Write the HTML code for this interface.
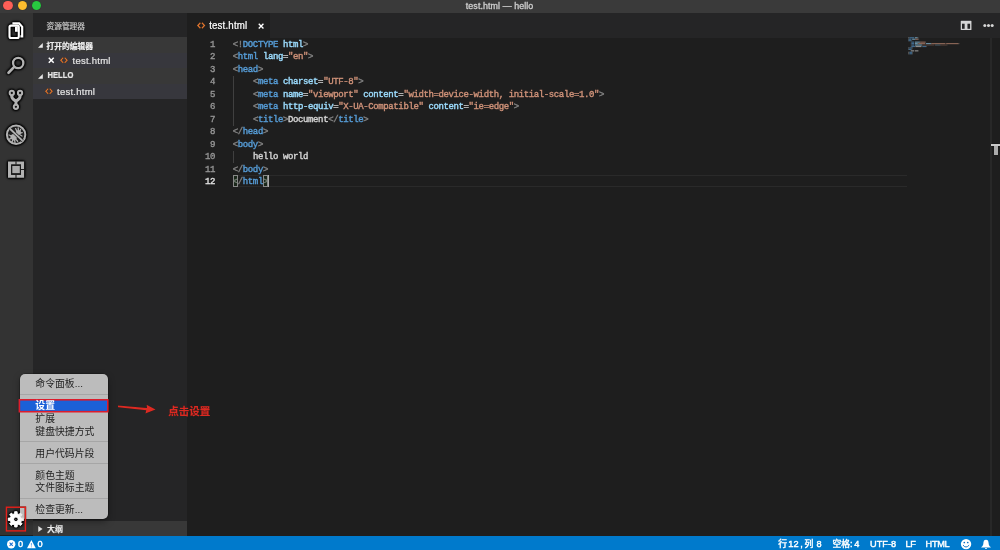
<!DOCTYPE html>
<html lang="zh">
<head>
<meta charset="UTF-8">
<title>test.html — hello</title>
<style>
*{box-sizing:border-box;margin:0;padding:0}
html,body{width:1000px;height:550px;overflow:hidden;background:#1e1e1e}
body{position:relative;font-family:"Liberation Sans",sans-serif;font-size:9px;color:#ccc;-webkit-font-smoothing:antialiased}
.abs{position:absolute}
svg{display:block;overflow:visible}
.hi{filter:drop-shadow(0 0 .6px rgba(0,0,0,.9))}
.cj{font-family:"Liberation Sans","Noto Sans CJK SC",sans-serif}
.lat{transform:scaleY(1.15);transform-origin:0 58%;-webkit-text-stroke:.3px currentColor}
.t{position:absolute;white-space:nowrap;line-height:12px;height:12px;-webkit-text-stroke:.2px currentColor}
/* regions */
#titlebar{left:0;top:0;width:1000px;height:13px;background:#3a3a3a}
#title{left:0;width:999px;top:1px;text-align:center;font-size:8.9px;color:#d0d0d0;line-height:11px;-webkit-text-stroke:.3px #d0d0d0}
.tl{position:absolute;top:.8px;width:9.4px;height:9.4px;border-radius:50%;box-shadow:0 0 .8px rgba(0,0,0,.7)}
#activity{left:0;top:13px;width:33px;height:522px;background:#333333}
#sidebar{left:33px;top:13px;width:154px;height:522px;background:#252526}
#tabs{left:187px;top:13px;width:813px;height:25px;background:#252526}
#tab{left:187px;top:13px;width:83px;height:25px;background:#1e1e1e}
#status{left:0;top:536px;width:1000px;height:14px;background:#007acc}
.row{position:absolute;left:33px;width:154px;height:15.4px}
.hdr{background:#383838}
.sel{background:#37373d}
/* code */
.ln{position:absolute;left:195px;width:20px;text-align:right;font-family:"Liberation Mono",monospace;font-size:9px;letter-spacing:-.37px;line-height:12.5px;height:12.5px;color:#969696;-webkit-text-stroke:.35px currentColor}
.lc{white-space:pre}
.lc i{display:inline-block;font-style:normal;overflow:visible}
.cl i{display:inline-block;width:5.03px;font-style:normal;overflow:visible}
.cl{position:absolute;left:232.8px;white-space:pre;font-family:"Liberation Mono",monospace;font-size:9px;line-height:12.5px;height:12.5px;color:#d4d4d4;-webkit-text-stroke:.4px currentColor}
.g{color:#808080}.b{color:#569cd6}.a{color:#9cdcfe}.s{color:#ce9178}
.guide{position:absolute;left:233px;width:1px;background:#404040}
/* menu */
#menu{left:20px;top:373.5px;width:88px;height:145px;background:#bcbcbc;border-radius:5px;box-shadow:0 3px 7px rgba(0,0,0,.35),0 0 0 .5px rgba(0,0,0,.4)}
.mi{position:absolute;left:15.3px;white-space:nowrap;color:#222;font-size:9.85px;line-height:12px;height:12px}
.sep{position:absolute;left:0;width:88px;height:1px;background:#a6a6a6;box-shadow:0 0 .6px #a6a6a6}
.st{position:absolute;top:538.2px;color:#fff;-webkit-text-stroke:.4px #fff;font-size:9.2px;line-height:12px;height:12px;white-space:nowrap}
</style>
</head>
<body>
<div id="root" style="position:absolute;left:0;top:0;width:1000px;height:550px;will-change:transform">
<!-- title bar -->
<div id="titlebar" class="abs"></div>
<div class="tl" style="left:3.3px;background:#fc5f57"></div>
<div class="tl" style="left:17.5px;background:#fdbc2e"></div>
<div class="tl" style="left:31.5px;background:#28c840"></div>
<div id="title" class="abs"><span class="lc"><i style="width:2.55px">t</i><i style="width:5.03px">e</i><i style="width:4.53px">s</i><i style="width:2.55px">t</i><i style="width:2.55px">.</i><i style="width:5.03px">h</i><i style="width:2.55px">t</i><i style="width:7.49px">m</i><i style="width:2.06px">l</i><i style="width:2.55px"> </i><i style="width:8.98px">—</i><i style="width:2.55px"> </i><i style="width:5.03px">h</i><i style="width:5.03px">e</i><i style="width:2.06px">l</i><i style="width:2.06px">l</i><i style="width:5.03px">o</i></span></div>

<!-- activity bar -->
<div id="activity" class="abs"></div>
<svg class="abs" style="left:0;top:0;filter:drop-shadow(0 0 .9px #000) drop-shadow(0 0 .8px #000) drop-shadow(0 0 .6px rgba(0,0,0,.8))" width="34" height="200" viewBox="0 0 34 200">
<path d="M12.4 23.3H19.1L22.2 26.8V36.3H20.4" fill="none" stroke="#fff" stroke-width="2.2" stroke-linejoin="miter"/>
<path d="M11 25.6H17.3Q18.8 25.6 18.8 27.1V36.5Q18.8 38 17.3 38H11Q9.5 38 9.5 36.5V27.1Q9.5 25.6 11 25.6Z" fill="none" stroke="#fff" stroke-width="2.1"/>
<path d="M15 26.6H17.8V31.8H15Z" fill="#fff"/>
<circle cx="18.2" cy="63" r="5.15" fill="none" stroke="#b2b2b2" stroke-width="2.3"/>
<path d="M14.2 66.9L8.5 72.7" stroke="#b2b2b2" stroke-width="2.7" stroke-linecap="round"/>
<path d="M11.8 95.3V96.6Q11.8 98.6 15.9 101.3Q20.05 98.6 20.05 96.6V95.3M15.9 101V105" fill="none" stroke="#b2b2b2" stroke-width="3.1" stroke-linejoin="round"/>
<circle cx="11.8" cy="93.0" r="2.15" fill="#161616" stroke="#b2b2b2" stroke-width="2"/>
<circle cx="20.05" cy="93.0" r="2.15" fill="#161616" stroke="#b2b2b2" stroke-width="2"/>
<circle cx="15.9" cy="106.8" r="2.15" fill="#161616" stroke="#b2b2b2" stroke-width="2"/>
<circle cx="16.1" cy="134.7" r="9.2" fill="#1f1f1f" stroke="#b2b2b2" stroke-width="2"/>
<g stroke="#b2b2b2" stroke-width="1.3" fill="none" stroke-linecap="round"><path d="M15.6 128.6L16.8 131.2M18.2 127.9L18.4 130.6M20.6 129.4L19.6 131.6M22.2 132.6L20 133.2M22 136L19.8 134.8M9 135L11.6 136M9.4 139.2L11.8 138.2M12 142L13 139.6M15 142.6L14.6 140M17.6 141.2L16 139.4"/></g>
<ellipse cx="13.6" cy="137.3" rx="2.9" ry="3.3" fill="#b2b2b2" transform="rotate(-45 13.6 137.3)"/>
<circle cx="18.5" cy="132.4" r="2.5" fill="#b2b2b2"/>
<path d="M9.9 128.7L22.6 140.8" stroke="#181818" stroke-width="3.2"/>
<path d="M9.7 128.5L22.7 140.9" stroke="#b2b2b2" stroke-width="1.9"/>
<path fill="#b2b2b2" fill-rule="evenodd" d="M8.0 161.5H24.1V177.8H8.0ZM11.1 164.6V174.70000000000002H21.0V164.6Z"/>
<path fill="#202020" d="M15.45 161.3H16.55V164.79999999999998H15.45ZM15.45 174.50000000000003H16.55V178.0H15.45ZM20.8 168.9H24.3V169.9H20.8Z"/>
<path fill="#1c1c1c" d="M11.1 164.6H21.0V174.70000000000002H11.1Z"/>
<path fill="#aaaaaa" d="M12.3 166H19.8V173.1H12.3Z"/>
</svg>

<!-- sidebar -->
<div id="sidebar" class="abs"></div>
<div class="t" style="left:46.5px;top:19.5px"><span class="cj" style="font-size:7.7px;color:#c8c8c8">资源管理器</span></div>
<div class="row hdr" style="top:37.4px"></div>
<div class="row sel" style="top:52.8px"></div>
<div class="row hdr" style="top:68.2px"></div>
<div class="row sel" style="top:83.6px"></div>
<svg class="abs" style="left:38.2px;top:42.9px" width="4.8" height="4.8" viewBox="0 0 5 5"><path d="M5 0V5H0Z" fill="#e8e8e8"/></svg>
<div class="t" style="left:46.5px;top:39.5px"><span class="cj" style="font-size:7.75px;font-weight:bold;color:#eeeeee">打开的编辑器</span></div>
<svg class="abs" style="left:48px;top:57.3px" width="6.5" height="6.5" viewBox="0 0 10 10"><path d="M1.2 1.2L8.8 8.8M8.8 1.2L1.2 8.8" stroke="#fff" stroke-width="2.3" fill="none"/></svg>
<svg class="abs hi" style="left:59.7px;top:57.3px" width="7.9" height="6.5" viewBox="0 0 17 14"><path d="M7 1.3L1.7 7L7 12.7M10 1.3L15.3 7L10 12.7" stroke="#dc7530" stroke-width="2.7" fill="none"/></svg>
<div class="t lat" style="left:72.5px;top:54.8px;font-size:9.5px;color:#e4e4e4;transform:scaleY(1.05)"><span class="lc"><i style="width:2.90px">t</i><i style="width:5.54px">e</i><i style="width:5.01px">s</i><i style="width:2.90px">t</i><i style="width:2.90px">.</i><i style="width:5.54px">h</i><i style="width:2.90px">t</i><i style="width:8.17px">m</i><i style="width:2.37px">l</i></span></div>
<svg class="abs" style="left:38.2px;top:73.6px" width="4.8" height="4.8" viewBox="0 0 5 5"><path d="M5 0V5H0Z" fill="#e8e8e8"/></svg>
<div class="t" style="left:47.4px;top:69.9px;font-size:7.6px;font-weight:bold;color:#e6e6e6;transform:scaleY(1.16);transform-origin:0 55%"><span class="lc"><i style="width:5.54px">H</i><i style="width:5.12px">E</i><i style="width:4.69px">L</i><i style="width:4.69px">L</i><i style="width:5.96px">O</i></span></div>
<svg class="abs hi" style="left:44.6px;top:88.3px" width="7.9" height="6.5" viewBox="0 0 17 14"><path d="M7 1.3L1.7 7L7 12.7M10 1.3L15.3 7L10 12.7" stroke="#dc7530" stroke-width="2.7" fill="none"/></svg>
<div class="t lat" style="left:57px;top:86.2px;font-size:9.5px;color:#e4e4e4;transform:scaleY(1.05)"><span class="lc"><i style="width:2.90px">t</i><i style="width:5.54px">e</i><i style="width:5.01px">s</i><i style="width:2.90px">t</i><i style="width:2.90px">.</i><i style="width:5.54px">h</i><i style="width:2.90px">t</i><i style="width:8.17px">m</i><i style="width:2.37px">l</i></span></div>
<!-- outline row -->
<div class="row" style="top:521px;height:15px;background:#383838"></div>
<svg class="abs" style="left:37.8px;top:526.3px" width="4.8" height="6" viewBox="0 0 5 7"><path d="M0 0L5 3.5L0 7Z" fill="#e0e0e0"/></svg>
<div class="t" style="left:47px;top:523px;filter:drop-shadow(0 0 .5px rgba(0,0,0,.8))"><span class="cj" style="font-size:8px;font-weight:bold;color:#f0f0f0">大纲</span></div>

<!-- tabs -->
<div id="tabs" class="abs"></div>
<div id="tab" class="abs"></div>
<svg class="abs hi" style="left:196.8px;top:22.4px" width="8.3" height="7" viewBox="0 0 17 14"><path d="M7 1.3L1.7 7L7 12.7M10 1.3L15.3 7L10 12.7" stroke="#dc7530" stroke-width="2.7" fill="none"/></svg>
<div class="t lat" style="left:209.2px;top:20.4px;font-size:9.7px;color:#ffffff"><span class="lc"><i style="width:2.86px">t</i><i style="width:5.56px">e</i><i style="width:5.02px">s</i><i style="width:2.86px">t</i><i style="width:2.86px">.</i><i style="width:5.56px">h</i><i style="width:2.86px">t</i><i style="width:8.25px">m</i><i style="width:2.33px">l</i></span></div>
<svg class="abs" style="left:258px;top:23px" width="6.2" height="6.2" viewBox="0 0 10 10"><path d="M1.2 1.2L8.8 8.8M8.8 1.2L1.2 8.8" stroke="#fff" stroke-width="2.2" fill="none"/></svg>
<!-- split + more -->
<svg class="abs" style="left:955px;top:15px;filter:drop-shadow(0 0 .6px #000)" width="45" height="20" viewBox="955 15 45 20"><path fill="#d6d6d6" fill-rule="evenodd" d="M961.2 20.8H971Q971.5 20.8 971.5 21.3V29.5Q971.5 30 971 30H961.2Q960.7 30 960.7 29.5V21.3Q960.7 20.8 961.2 20.8ZM962 23.7V28.7H964.6V23.7ZM967.5 23.7V28.7H970.1V23.7Z"/><circle cx="984.8" cy="25.5" r="1.55" fill="#d6d6d6"/><circle cx="988.5" cy="25.5" r="1.55" fill="#d6d6d6"/><circle cx="992.2" cy="25.5" r="1.55" fill="#d6d6d6"/></svg>

<!-- editor -->
<div class="abs" style="left:233px;top:174.8px;width:674px;height:12.7px;border-top:1px solid #2a2a2a;border-bottom:1px solid #2a2a2a"></div>
<div class="guide" style="top:75.5px;height:50px"></div>
<div class="guide" style="top:150.5px;height:12.5px"></div>
<div class="ln" style="top:38.60px">1</div>
<div class="cl" style="top:38.60px"><span class="g"><i>&lt;</i><i>!</i></span><span class="b"><i>D</i><i>O</i><i>C</i><i>T</i><i>Y</i><i>P</i><i>E</i></span><i style="width:5.03px"> </i><span class="a"><i>h</i><i>t</i><i>m</i><i>l</i></span><span class="g"><i>&gt;</i></span></div>
<div class="ln" style="top:51.10px">2</div>
<div class="cl" style="top:51.10px"><span class="g"><i>&lt;</i></span><span class="b"><i>h</i><i>t</i><i>m</i><i>l</i></span><i style="width:5.03px"> </i><span class="a"><i>l</i><i>a</i><i>n</i><i>g</i></span><i>=</i><span class="s"><i>"</i><i>e</i><i>n</i><i>"</i></span><span class="g"><i>&gt;</i></span></div>
<div class="ln" style="top:63.60px">3</div>
<div class="cl" style="top:63.60px"><span class="g"><i>&lt;</i></span><span class="b"><i>h</i><i>e</i><i>a</i><i>d</i></span><span class="g"><i>&gt;</i></span></div>
<div class="ln" style="top:76.10px">4</div>
<div class="cl" style="top:76.10px"><i style="width:20.12px"> </i><span class="g"><i>&lt;</i></span><span class="b"><i>m</i><i>e</i><i>t</i><i>a</i></span><i style="width:5.03px"> </i><span class="a"><i>c</i><i>h</i><i>a</i><i>r</i><i>s</i><i>e</i><i>t</i></span><i>=</i><span class="s"><i>"</i><i>U</i><i>T</i><i>F</i><i>-</i><i>8</i><i>"</i></span><span class="g"><i>&gt;</i></span></div>
<div class="ln" style="top:88.60px">5</div>
<div class="cl" style="top:88.60px"><i style="width:20.12px"> </i><span class="g"><i>&lt;</i></span><span class="b"><i>m</i><i>e</i><i>t</i><i>a</i></span><i style="width:5.03px"> </i><span class="a"><i>n</i><i>a</i><i>m</i><i>e</i></span><i>=</i><span class="s"><i>"</i><i>v</i><i>i</i><i>e</i><i>w</i><i>p</i><i>o</i><i>r</i><i>t</i><i>"</i></span><i style="width:5.03px"> </i><span class="a"><i>c</i><i>o</i><i>n</i><i>t</i><i>e</i><i>n</i><i>t</i></span><i>=</i><span class="s"><i>"</i><i>w</i><i>i</i><i>d</i><i>t</i><i>h</i><i>=</i><i>d</i><i>e</i><i>v</i><i>i</i><i>c</i><i>e</i><i>-</i><i>w</i><i>i</i><i>d</i><i>t</i><i>h</i><i>,</i><i style="width:5.03px"> </i><i>i</i><i>n</i><i>i</i><i>t</i><i>i</i><i>a</i><i>l</i><i>-</i><i>s</i><i>c</i><i>a</i><i>l</i><i>e</i><i>=</i><i>1</i><i>.</i><i>0</i><i>"</i></span><span class="g"><i>&gt;</i></span></div>
<div class="ln" style="top:101.10px">6</div>
<div class="cl" style="top:101.10px"><i style="width:20.12px"> </i><span class="g"><i>&lt;</i></span><span class="b"><i>m</i><i>e</i><i>t</i><i>a</i></span><i style="width:5.03px"> </i><span class="a"><i>h</i><i>t</i><i>t</i><i>p</i><i>-</i><i>e</i><i>q</i><i>u</i><i>i</i><i>v</i></span><i>=</i><span class="s"><i>"</i><i>X</i><i>-</i><i>U</i><i>A</i><i>-</i><i>C</i><i>o</i><i>m</i><i>p</i><i>a</i><i>t</i><i>i</i><i>b</i><i>l</i><i>e</i><i>"</i></span><i style="width:5.03px"> </i><span class="a"><i>c</i><i>o</i><i>n</i><i>t</i><i>e</i><i>n</i><i>t</i></span><i>=</i><span class="s"><i>"</i><i>i</i><i>e</i><i>=</i><i>e</i><i>d</i><i>g</i><i>e</i><i>"</i></span><span class="g"><i>&gt;</i></span></div>
<div class="ln" style="top:113.60px">7</div>
<div class="cl" style="top:113.60px"><i style="width:20.12px"> </i><span class="g"><i>&lt;</i></span><span class="b"><i>t</i><i>i</i><i>t</i><i>l</i><i>e</i></span><span class="g"><i>&gt;</i></span><i>D</i><i>o</i><i>c</i><i>u</i><i>m</i><i>e</i><i>n</i><i>t</i><span class="g"><i>&lt;</i><i>/</i></span><span class="b"><i>t</i><i>i</i><i>t</i><i>l</i><i>e</i></span><span class="g"><i>&gt;</i></span></div>
<div class="ln" style="top:126.10px">8</div>
<div class="cl" style="top:126.10px"><span class="g"><i>&lt;</i><i>/</i></span><span class="b"><i>h</i><i>e</i><i>a</i><i>d</i></span><span class="g"><i>&gt;</i></span></div>
<div class="ln" style="top:138.60px">9</div>
<div class="cl" style="top:138.60px"><span class="g"><i>&lt;</i></span><span class="b"><i>b</i><i>o</i><i>d</i><i>y</i></span><span class="g"><i>&gt;</i></span></div>
<div class="ln" style="top:151.10px">10</div>
<div class="cl" style="top:151.10px"><i style="width:20.12px"> </i><i>h</i><i>e</i><i>l</i><i>l</i><i>o</i><i style="width:5.03px"> </i><i>w</i><i>o</i><i>r</i><i>l</i><i>d</i></div>
<div class="ln" style="top:163.60px">11</div>
<div class="cl" style="top:163.60px"><span class="g"><i>&lt;</i><i>/</i></span><span class="b"><i>b</i><i>o</i><i>d</i><i>y</i></span><span class="g"><i>&gt;</i></span></div>
<div class="ln" style="top:176.10px;color:#e2e2e2">12</div>
<div class="cl" style="top:176.10px"><span class="g"><i>&lt;</i><i>/</i></span><span class="b"><i>h</i><i>t</i><i>m</i><i>l</i></span><span class="g"><i>&gt;</i></span></div>
<div class="abs" style="left:232.9px;top:175.3px;width:5.3px;height:11.7px;border:1px solid #888;background:rgba(0,100,0,.13)"></div>
<div class="abs" style="left:263.1px;top:175.3px;width:5.3px;height:11.7px;border:1px solid #888;background:rgba(0,100,0,.13)"></div>
<div class="abs" style="left:268.3px;top:175.3px;width:1.2px;height:11.7px;background:#aeafad"></div>
<!-- minimap -->
<svg class="abs" style="left:907.5px;top:37.2px" width="60" height="18" viewBox="0 0 60 18" opacity=".6"><rect x="0.00" y="0.20" width="1.39" height="1.2" fill="#808080"/><rect x="1.39" y="0.20" width="4.86" height="1.2" fill="#569cd6"/><rect x="6.94" y="0.20" width="2.78" height="1.2" fill="#9cdcfe"/><rect x="9.72" y="0.20" width="0.69" height="1.2" fill="#808080"/><rect x="0.00" y="1.65" width="0.69" height="1.2" fill="#808080"/><rect x="0.69" y="1.65" width="2.78" height="1.2" fill="#569cd6"/><rect x="4.16" y="1.65" width="2.78" height="1.2" fill="#9cdcfe"/><rect x="6.94" y="1.65" width="0.69" height="1.2" fill="#d4d4d4"/><rect x="7.63" y="1.65" width="2.78" height="1.2" fill="#ce9178"/><rect x="10.41" y="1.65" width="0.69" height="1.2" fill="#808080"/><rect x="0.00" y="3.10" width="0.69" height="1.2" fill="#808080"/><rect x="0.69" y="3.10" width="2.78" height="1.2" fill="#569cd6"/><rect x="3.47" y="3.10" width="0.69" height="1.2" fill="#808080"/><rect x="2.78" y="4.55" width="0.69" height="1.2" fill="#808080"/><rect x="3.47" y="4.55" width="2.78" height="1.2" fill="#569cd6"/><rect x="6.94" y="4.55" width="4.86" height="1.2" fill="#9cdcfe"/><rect x="11.80" y="4.55" width="0.69" height="1.2" fill="#d4d4d4"/><rect x="12.49" y="4.55" width="4.86" height="1.2" fill="#ce9178"/><rect x="17.35" y="4.55" width="0.69" height="1.2" fill="#808080"/><rect x="2.78" y="6.00" width="0.69" height="1.2" fill="#808080"/><rect x="3.47" y="6.00" width="2.78" height="1.2" fill="#569cd6"/><rect x="6.94" y="6.00" width="2.78" height="1.2" fill="#9cdcfe"/><rect x="9.72" y="6.00" width="0.69" height="1.2" fill="#d4d4d4"/><rect x="10.41" y="6.00" width="6.94" height="1.2" fill="#ce9178"/><rect x="18.04" y="6.00" width="4.86" height="1.2" fill="#9cdcfe"/><rect x="22.90" y="6.00" width="0.69" height="1.2" fill="#d4d4d4"/><rect x="23.60" y="6.00" width="13.88" height="1.2" fill="#ce9178"/><rect x="38.17" y="6.00" width="12.49" height="1.2" fill="#ce9178"/><rect x="50.66" y="6.00" width="0.69" height="1.2" fill="#808080"/><rect x="2.78" y="7.45" width="0.69" height="1.2" fill="#808080"/><rect x="3.47" y="7.45" width="2.78" height="1.2" fill="#569cd6"/><rect x="6.94" y="7.45" width="6.94" height="1.2" fill="#9cdcfe"/><rect x="13.88" y="7.45" width="0.69" height="1.2" fill="#d4d4d4" opacity=".45"/><rect x="14.57" y="7.45" width="11.80" height="1.2" fill="#ce9178" opacity=".45"/><rect x="27.07" y="7.45" width="4.86" height="1.2" fill="#9cdcfe" opacity=".45"/><rect x="31.92" y="7.45" width="0.69" height="1.2" fill="#d4d4d4" opacity=".45"/><rect x="32.62" y="7.45" width="6.25" height="1.2" fill="#ce9178" opacity=".45"/><rect x="38.86" y="7.45" width="0.69" height="1.2" fill="#808080" opacity=".45"/><rect x="2.78" y="8.90" width="0.69" height="1.2" fill="#808080"/><rect x="3.47" y="8.90" width="3.47" height="1.2" fill="#569cd6"/><rect x="6.94" y="8.90" width="0.69" height="1.2" fill="#808080"/><rect x="7.63" y="8.90" width="5.55" height="1.2" fill="#d4d4d4"/><rect x="13.19" y="8.90" width="1.39" height="1.2" fill="#808080"/><rect x="14.57" y="8.90" width="3.47" height="1.2" fill="#569cd6"/><rect x="18.04" y="8.90" width="0.69" height="1.2" fill="#808080"/><rect x="0.00" y="10.35" width="1.39" height="1.2" fill="#808080"/><rect x="1.39" y="10.35" width="2.78" height="1.2" fill="#569cd6"/><rect x="4.16" y="10.35" width="0.69" height="1.2" fill="#808080"/><rect x="0.00" y="11.80" width="0.69" height="1.2" fill="#808080"/><rect x="0.69" y="11.80" width="2.78" height="1.2" fill="#569cd6"/><rect x="3.47" y="11.80" width="0.69" height="1.2" fill="#808080"/><rect x="2.78" y="13.25" width="3.47" height="1.2" fill="#d4d4d4"/><rect x="6.94" y="13.25" width="3.47" height="1.2" fill="#d4d4d4"/><rect x="0.00" y="14.70" width="1.39" height="1.2" fill="#808080"/><rect x="1.39" y="14.70" width="2.78" height="1.2" fill="#569cd6"/><rect x="4.16" y="14.70" width="0.69" height="1.2" fill="#808080"/><rect x="0.00" y="16.15" width="1.39" height="1.2" fill="#808080"/><rect x="1.39" y="16.15" width="2.78" height="1.2" fill="#569cd6"/><rect x="4.16" y="16.15" width="0.69" height="1.2" fill="#808080"/></svg>
<!-- overview ruler -->
<div class="abs" style="left:990px;top:38px;width:2px;height:498px;background:#282828"></div>
<div class="abs" style="left:990.7px;top:144.2px;width:9.3px;height:2px;background:#cacaca;box-shadow:0 0 1px #000"></div>
<div class="abs" style="left:994.2px;top:144.2px;width:3.9px;height:11px;background:#ababab;box-shadow:0 0 1px #000"></div>
<div class="abs" style="left:990.7px;top:144.2px;width:9.3px;height:2px;background:#cacaca"></div>

<svg class="abs" style="left:0;top:500px;filter:drop-shadow(0 0 .9px #000) drop-shadow(0 0 .8px #000) drop-shadow(0 0 .6px rgba(0,0,0,.8))" width="34" height="35" viewBox="0 500 34 35"><path fill="#fff" fill-rule="evenodd" stroke="#fff" stroke-width=".7" stroke-linejoin="round" d="M14.61 513.75L14.70 511.69L17.10 511.69L17.19 513.75L18.92 514.46L20.43 513.07L22.13 514.77L20.74 516.28L21.45 518.01L23.51 518.10L23.51 520.50L21.45 520.59L20.74 522.32L22.13 523.83L20.43 525.53L18.92 524.14L17.19 524.85L17.10 526.91L14.70 526.91L14.61 524.85L12.88 524.14L11.37 525.53L9.67 523.83L11.06 522.32L10.35 520.59L8.29 520.50L8.29 518.10L10.35 518.01L11.06 516.28L9.67 514.77L11.37 513.07L12.88 514.46ZM13.60 519.30a2.3 2.3 0 1 0 4.6 0a2.3 2.3 0 1 0 -4.6 0Z"/><circle cx="15.9" cy="519.3" r=".45" fill="#fff"/></svg>
<!-- context menu -->
<div id="menu" class="abs">
  <div class="mi" style="top:4.4px"><span class="cj" style="font-size:9.85px;color:#1e1e1e">命令面板</span>...</div>
  <div class="sep" style="top:20.5px"></div>
  <div class="abs" style="left:0;top:26px;width:88px;height:11.5px;background:#1b60d8"></div>
  <svg class="abs" style="left:-3px;top:23px" width="94" height="18" viewBox="-3 23 94 18"><rect x="-.6" y="25.8" width="88.4" height="11.9" fill="none" stroke="#dc1c2c" stroke-width="1.6"/></svg>
  <div class="mi" style="top:26.3px"><span class="cj" style="font-size:9.85px;font-weight:bold;color:#ffffff">设置</span></div>
  <div class="mi" style="top:39.7px"><span class="cj" style="font-size:9.85px;color:#1e1e1e">扩展</span></div>
  <div class="mi" style="top:52.5px"><span class="cj" style="font-size:9.85px;color:#1e1e1e">键盘快捷方式</span></div>
  <div class="sep" style="top:67.5px"></div>
  <div class="mi" style="top:74px"><span class="cj" style="font-size:9.85px;color:#1e1e1e">用户代码片段</span></div>
  <div class="sep" style="top:89.5px"></div>
  <div class="mi" style="top:96px"><span class="cj" style="font-size:9.85px;color:#1e1e1e">颜色主题</span></div>
  <div class="mi" style="top:108.3px"><span class="cj" style="font-size:9.85px;color:#1e1e1e">文件图标主题</span></div>
  <div class="sep" style="top:124.5px"></div>
  <div class="mi" style="top:130px"><span class="cj" style="font-size:9.85px;color:#1e1e1e">检查更新</span>...</div>
</div>
<!-- annotation -->
<svg class="abs" style="left:115px;top:400px;filter:drop-shadow(0 0 .5px rgba(0,25,25,.9))" width="45" height="18" viewBox="115 400 45 18"><path d="M118 405.4L147 408.1L146.6 404.8L155.6 409.6L145.4 413.6L146.2 410.2L118 407.2Z" fill="#dc2a22"/></svg>
<div class="t" style="left:168.3px;top:404.5px;filter:drop-shadow(0 0 .5px rgba(0,25,25,.9))"><span class="cj" style="font-size:10.5px;font-weight:bold;color:#dc2a22">点击设置</span></div>
<!-- gear highlight -->
<svg class="abs" style="left:0;top:500px;opacity:.75" width="34" height="35" viewBox="0 500 34 35"><path fill="#fff" fill-rule="evenodd" stroke="#fff" stroke-width=".7" stroke-linejoin="round" d="M14.61 513.75L14.70 511.69L17.10 511.69L17.19 513.75L18.92 514.46L20.43 513.07L22.13 514.77L20.74 516.28L21.45 518.01L23.51 518.10L23.51 520.50L21.45 520.59L20.74 522.32L22.13 523.83L20.43 525.53L18.92 524.14L17.19 524.85L17.10 526.91L14.70 526.91L14.61 524.85L12.88 524.14L11.37 525.53L9.67 523.83L11.06 522.32L10.35 520.59L8.29 520.50L8.29 518.10L10.35 518.01L11.06 516.28L9.67 514.77L11.37 513.07L12.88 514.46ZM13.60 519.30a2.3 2.3 0 1 0 4.6 0a2.3 2.3 0 1 0 -4.6 0Z"/></svg>
<svg class="abs" style="left:0;top:500px;filter:drop-shadow(0 0 .5px rgba(0,40,40,.8))" width="34" height="35" viewBox="0 500 34 35"><rect x="6.4" y="507.2" width="19" height="23.7" fill="none" stroke="#e3211c" stroke-width="1.5"/></svg>

<!-- status bar -->
<div id="status" class="abs"></div>
<svg class="abs" style="left:7.1px;top:540.2px" width="8.4" height="8.4" viewBox="0 0 10 10"><circle cx="5" cy="5" r="5" fill="#fff"/><path d="M3.1 3.1L6.9 6.9M6.9 3.1L3.1 6.9" stroke="#1a6fd0" stroke-width="1.25"/></svg>
<div class="st" style="left:18px">0</div>
<svg class="abs" style="left:26.8px;top:540px" width="8.8" height="8.4" viewBox="0 0 10 9.5"><path d="M5 0L10 9.5H0Z" fill="#fff"/><path d="M5 3.4V6.4M5 7.3V8.3" stroke="#3a8fe0" stroke-width=".9"/></svg>
<div class="st" style="left:37.5px">0</div>
<div class="st" style="left:778.2px"><span class="cj" style="font-size:8.8px;color:#ffffff">行</span></div>
<div class="st" style="left:788.3px"><span class="lc"><i style="width:5.12px">1</i><i style="width:5.12px">2</i></span></div>
<div class="st" style="left:800.2px">,</div>
<div class="st" style="left:804.6px"><span class="cj" style="font-size:8.8px;color:#ffffff">列</span></div>
<div class="st" style="left:816.6px">8</div>
<div class="st" style="left:832.4px"><span class="cj" style="font-size:8.75px;color:#ffffff">空格</span></div>
<div class="st" style="left:850.0px">:</div>
<div class="st" style="left:854.3px">4</div>
<div class="st" style="left:870.1px"><span class="lc"><i style="width:6.64px">U</i><i style="width:5.62px">T</i><i style="width:5.62px">F</i><i style="width:3.06px">-</i><i style="width:5.12px">8</i></span></div>
<div class="st" style="left:905.4px"><span class="lc"><i style="width:4.92px">L</i><i style="width:5.42px">F</i></span></div>
<div class="st" style="left:925.6px"><span class="lc"><i style="width:6.29px">H</i><i style="width:5.27px">T</i><i style="width:7.31px">M</i><i style="width:4.77px">L</i></span></div>
<svg class="abs" style="left:955px;top:536px" width="45" height="14" viewBox="955 536 45 14">
<circle cx="966.05" cy="544.1" r="5.2" fill="#fff"/>
<circle cx="964.3" cy="542.5" r=".85" fill="#0a6fc4"/><circle cx="967.75" cy="542.5" r=".85" fill="#0a6fc4"/>
<path d="M963.2 545.4Q966 548.9 968.9 545.4" fill="none" stroke="#0a6fc4" stroke-width=".95" stroke-linecap="round"/>
<path d="M986 539.7C983.9 539.7 983.5 541.6 983.4 543C983.3 545.2 982.6 546.3 981.3 547.1V547.6H990.7V547.1C989.4 546.3 988.7 545.2 988.6 543C988.5 541.6 988.1 539.7 986 539.7ZM985 548.1A1 1 0 0 0 987 548.1Z" fill="#fff"/>
</svg>
</div>
</body>
</html>
